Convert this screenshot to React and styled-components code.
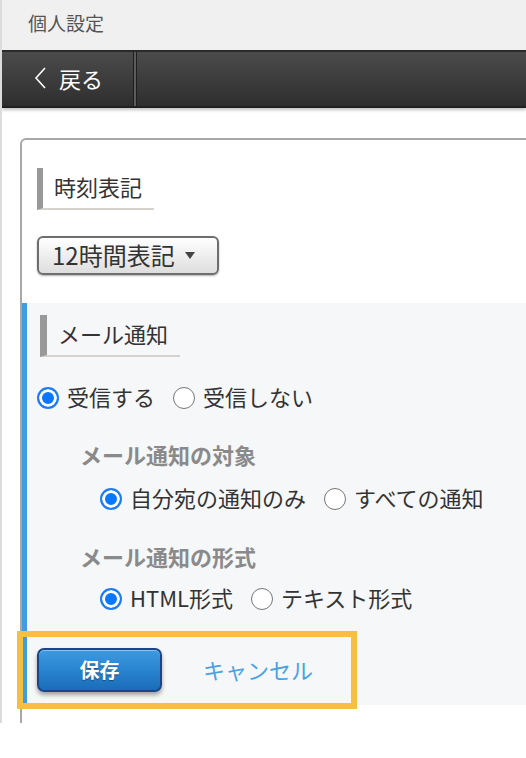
import React from 'react'
import styled, { createGlobalStyle } from 'styled-components'

const GlobalStyle = createGlobalStyle`
  body {
    margin: 0;
    background: #fff;
    font-family: "Noto Sans CJK JP", "Noto Sans", sans-serif;
    color: #333;
  }
`

const Page = styled.div`
  border-left: 2px solid #dcdcdc;
  overflow: hidden;
`

const TitleBar = styled.div`
  height: 50px;
  box-sizing: border-box;
  display: flex;
  align-items: center;
  padding: 0 0 6px 26px;
  background: #f0f0f0;
  color: #555;
  font-size: 19px;
`

const NavBar = styled.div`
  height: 54px;
  display: flex;
  border-top: 2px solid #2a2a2a;
  border-bottom: 2px solid #202020;
  background: linear-gradient(#4b4b4b, #2e2e2e);
  box-shadow: 0 2px 3px rgba(0, 0, 0, 0.25);
`

const BackButton = styled.div`
  width: 131px;
  display: flex;
  align-items: center;
  gap: 12px;
  padding: 0 0 2px 31px;
  box-sizing: border-box;
  color: #fff;
  font-size: 22px;
`

const Divider = styled.div`
  width: 4px;
  background: linear-gradient(to right, #1e1e1e 25%, #5c5c5c 25% 75%, #1e1e1e 75%);
`

const Content = styled.div`
  padding: 30px 0 0 18px;
`

const Card = styled.div`
  border: 2px solid #a8a8a8;
  border-right: none;
  border-bottom: none;
  border-top-left-radius: 6px;
  padding-bottom: 18px;
`

const TimeSection = styled.div`
  padding: 28px 15px 28px 15px;
`

const Heading = styled.div`
  width: fit-content;
  margin-left: ${p => p.$indent || 0}px;
  border-left: ${p => p.$bar || 6}px solid #999;
  border-bottom: 2px solid #d6d2ce;
  padding: 0 12px 3px 11px;
  line-height: 37px;
  font-size: 22px;
  color: #333;
`

const Select = styled.div`
  margin-top: 26px;
  width: 182px;
  height: 39px;
  box-sizing: border-box;
  display: flex;
  align-items: center;
  padding: 0 22px 2px 13px;
  border: 2px solid #6e6e6e;
  border-radius: 6px;
  background: linear-gradient(#fff, #dedede);
  box-shadow: 0 1px 2px rgba(0, 0, 0, 0.3);
  font-size: 24px;
  color: #333;
`

const Caret = styled.span`
  margin: 2px 0 0 auto;
  border-left: 5px solid transparent;
  border-right: 5px solid transparent;
  border-top: 7px solid #444;
`

const MailSection = styled.div`
  background: #f6f7f9;
  border-left: 5px solid #3c9de0;
  padding: 12px 0 2px 10px;
`

const RadioRow = styled.div`
  display: flex;
  align-items: center;
  height: 30px;
  margin-top: ${p => p.$top}px;
  padding-left: ${p => p.$indent || 0}px;
`

const Option = styled.label`
  display: inline-flex;
  align-items: center;
  gap: 8px;
  margin-right: 18px;
  font-size: 22px;
  color: #333;
`

const OptionText = styled.span`
  padding-bottom: 4px;
`

const Radio = styled.span`
  width: 22px;
  height: 22px;
  box-sizing: border-box;
  border-radius: 50%;
  border: ${p => (p.$on ? '2px solid #1b7cf5' : '1.5px solid #767676')};
  background: ${p => (p.$on ? '#0a77ff' : '#fff')};
  box-shadow: ${p => (p.$on ? 'inset 0 0 0 3px #fff' : 'none')};
`

const SubHeading = styled.div`
  margin-top: ${p => p.$top}px;
  padding: 0 0 4px 43px;
  line-height: 26px;
  font-size: 22px;
  font-weight: bold;
  color: #8a8a8a;
`

const ButtonGroup = styled.div`
  display: flex;
  align-items: center;
  width: 328px;
  height: 66px;
  box-sizing: border-box;
  margin: 23px 0 0 -14px;
  padding-left: 14px;
  outline: 6px solid #f5bf42;
`

const SaveButton = styled.div`
  width: 125px;
  height: 44px;
  box-sizing: border-box;
  display: flex;
  align-items: center;
  justify-content: center;
  padding-bottom: 2px;
  border: 2px solid #1c4587;
  border-radius: 7px;
  background: linear-gradient(#3d9ae0, #2a84d0 50%, #1a6cb8);
  box-shadow: 0 3px 4px rgba(0, 0, 0, 0.35), inset 0 1px 0 rgba(255, 255, 255, 0.4);
  color: #fff;
  font-size: 20px;
  font-weight: bold;
  text-shadow: 0 1px 1px rgba(0, 0, 0, 0.4);
`

const CancelLink = styled.span`
  margin-left: 41px;
  padding-bottom: 3px;
  color: #4aa2e2;
  font-size: 22px;
`

const ChoiceRow = ({ top, indent, options, value }) => (
  <RadioRow $top={top} $indent={indent}>
    {options.map(o => (
      <Option key={o}>
        <Radio $on={o === value} />
        <OptionText>{o}</OptionText>
      </Option>
    ))}
  </RadioRow>
)

export default function App() {
  return (
    <Page>
      <GlobalStyle />
      <TitleBar>個人設定</TitleBar>
      <NavBar>
        <BackButton>
          <svg width="14" height="24" viewBox="0 0 14 24">
            <polyline points="12,2 3,12 12,22" fill="none" stroke="#fff" strokeWidth="1.6" />
          </svg>
          戻る
        </BackButton>
        <Divider />
      </NavBar>
      <Content>
        <Card>
          <TimeSection>
            <Heading>時刻表記</Heading>
            <Select>
              12時間表記
              <Caret />
            </Select>
          </TimeSection>
          <MailSection>
            <Heading $indent={3} $bar={7}>メール通知</Heading>
            <ChoiceRow top={26} options={['受信する', '受信しない']} value="受信する" />
            <SubHeading $top={28}>メール通知の対象</SubHeading>
            <ChoiceRow top={13} indent={63} options={['自分宛の通知のみ', 'すべての通知']} value="自分宛の通知のみ" />
            <SubHeading $top={29}>メール通知の形式</SubHeading>
            <ChoiceRow top={11} indent={63} options={['HTML形式', 'テキスト形式']} value="HTML形式" />
            <ButtonGroup>
              <SaveButton>保存</SaveButton>
              <CancelLink>キャンセル</CancelLink>
            </ButtonGroup>
          </MailSection>
        </Card>
      </Content>
    </Page>
  )
}
